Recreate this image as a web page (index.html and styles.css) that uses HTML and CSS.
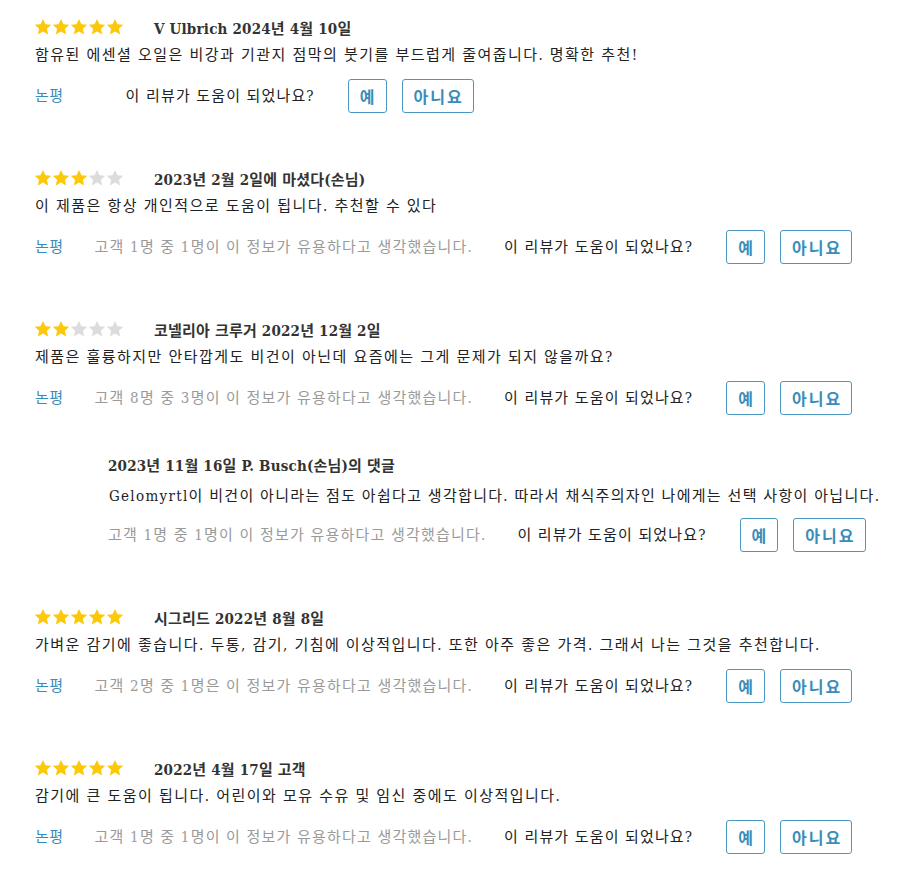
FILE: index.html
```html
<!DOCTYPE html>
<html lang="ko">
<head>
<meta charset="utf-8">
<title>리뷰</title>
<link rel="stylesheet" href="styles.css">
</head>
<body>
<svg width="0" height="0" class="defs">
  <defs>
    <symbol id="star" viewBox="0 0 24 24"><path d="M12 1.2l3.3 7 7.7.9-5.8 5.2 1.7 7.6L12 18l-6.9 3.9 1.7-7.6L1 9.1l7.7-.9z"/></symbol>
  </defs>
</svg>
<div class="reviews">

  <div class="review">
    <div class="head">
      <div class="stars"><svg class="on"><use href="#star"/></svg><svg class="on"><use href="#star"/></svg><svg class="on"><use href="#star"/></svg><svg class="on"><use href="#star"/></svg><svg class="on"><use href="#star"/></svg></div>
      <div class="title">V Ulbrich 2024년 4월 10일</div>
    </div>
    <p class="text">함유된 에센셜 오일은 비강과 기관지 점막의 붓기를 부드럽게 줄여줍니다. 명확한 추천!</p>
    <div class="actions">
      <a class="link" href="#">논평</a>
      <span class="count"></span>
      <span class="ask">이 리뷰가 도움이 되었나요?</span>
      <div class="btns"><button class="btn">예</button><button class="btn">아니요</button></div>
    </div>
  </div>

  <div class="review">
    <div class="head">
      <div class="stars"><svg class="on"><use href="#star"/></svg><svg class="on"><use href="#star"/></svg><svg class="on"><use href="#star"/></svg><svg class="off"><use href="#star"/></svg><svg class="off"><use href="#star"/></svg></div>
      <div class="title">2023년 2월 2일에 마셨다(손님)</div>
    </div>
    <p class="text">이 제품은 항상 개인적으로 도움이 됩니다. 추천할 수 있다</p>
    <div class="actions">
      <a class="link" href="#">논평</a>
      <span class="count">고객 1명 중 1명이 이 정보가 유용하다고 생각했습니다.</span>
      <span class="ask">이 리뷰가 도움이 되었나요?</span>
      <div class="btns"><button class="btn">예</button><button class="btn">아니요</button></div>
    </div>
  </div>

  <div class="review">
    <div class="head">
      <div class="stars"><svg class="on"><use href="#star"/></svg><svg class="on"><use href="#star"/></svg><svg class="off"><use href="#star"/></svg><svg class="off"><use href="#star"/></svg><svg class="off"><use href="#star"/></svg></div>
      <div class="title">코넬리아 크루거 2022년 12월 2일</div>
    </div>
    <p class="text">제품은 훌륭하지만 안타깝게도 비건이 아닌데 요즘에는 그게 문제가 되지 않을까요?</p>
    <div class="actions">
      <a class="link" href="#">논평</a>
      <span class="count">고객 8명 중 3명이 이 정보가 유용하다고 생각했습니다.</span>
      <span class="ask">이 리뷰가 도움이 되었나요?</span>
      <div class="btns"><button class="btn">예</button><button class="btn">아니요</button></div>
    </div>
  </div>

  <div class="reply">
    <div class="reply-title">2023년 11월 16일 P. Busch(손님)의 댓글</div>
    <p class="text">Gelomyrtl이 비건이 아니라는 점도 아쉽다고 생각합니다. 따라서 채식주의자인 나에게는 선택 사항이 아닙니다.</p>
    <div class="actions">
      <span class="count">고객 1명 중 1명이 이 정보가 유용하다고 생각했습니다.</span>
      <span class="ask">이 리뷰가 도움이 되었나요?</span>
      <div class="btns"><button class="btn">예</button><button class="btn">아니요</button></div>
    </div>
  </div>

  <div class="review">
    <div class="head">
      <div class="stars"><svg class="on"><use href="#star"/></svg><svg class="on"><use href="#star"/></svg><svg class="on"><use href="#star"/></svg><svg class="on"><use href="#star"/></svg><svg class="on"><use href="#star"/></svg></div>
      <div class="title">시그리드 2022년 8월 8일</div>
    </div>
    <p class="text">가벼운 감기에 좋습니다. 두통, 감기, 기침에 이상적입니다. 또한 아주 좋은 가격. 그래서 나는 그것을 추천합니다.</p>
    <div class="actions">
      <a class="link" href="#">논평</a>
      <span class="count">고객 2명 중 1명은 이 정보가 유용하다고 생각했습니다.</span>
      <span class="ask">이 리뷰가 도움이 되었나요?</span>
      <div class="btns"><button class="btn">예</button><button class="btn">아니요</button></div>
    </div>
  </div>

  <div class="review">
    <div class="head">
      <div class="stars"><svg class="on"><use href="#star"/></svg><svg class="on"><use href="#star"/></svg><svg class="on"><use href="#star"/></svg><svg class="on"><use href="#star"/></svg><svg class="on"><use href="#star"/></svg></div>
      <div class="title">2022년 4월 17일 고객</div>
    </div>
    <p class="text">감기에 큰 도움이 됩니다. 어린이와 모유 수유 및 임신 중에도 이상적입니다.</p>
    <div class="actions">
      <a class="link" href="#">논평</a>
      <span class="count">고객 1명 중 1명이 이 정보가 유용하다고 생각했습니다.</span>
      <span class="ask">이 리뷰가 도움이 되었나요?</span>
      <div class="btns"><button class="btn">예</button><button class="btn">아니요</button></div>
    </div>
  </div>

</div>
</body>
</html>
```
FILE: styles.css
```css
html, body {
  margin: 0;
  padding: 0;
  background: #fff;
}
body {
  font-family: "DejaVu Serif Condensed", "DejaVu Serif", "Noto Sans CJK KR", serif;
  font-stretch: condensed;
  font-size: 15px;
  color: #222;
}
.defs {
  position: absolute;
  width: 0;
  height: 0;
}
.reviews {
  padding: 15px 10px 0 34px;
}
.review {
  margin-bottom: 53px;
}
.head {
  display: flex;
  align-items: center;
  height: 24px;
  gap: 30px;
}
.stars {
  display: flex;
  gap: 0;
}
.stars svg {
  width: 18px;
  height: 18px;
}
.stars .on { fill: #fcc80a; }
.stars .off { fill: #dcdcdc; }
.title {
  font-weight: bold;
  color: #333;
  font-size: 15px;
  letter-spacing: 0.2px;
}
.text {
  margin: 4px 0 0 1px;
  line-height: 24px;
  font-size: 15px;
  letter-spacing: 1.45px;
  color: #222;
  white-space: nowrap;
}
.actions {
  display: flex;
  align-items: center;
  gap: 31px;
  margin-top: 12px;
  font-size: 15px;
  letter-spacing: 1.2px;
  line-height: 24px;
}
.link {
  color: #3a8db8;
  text-decoration: none;
  margin-left: 1px;
  letter-spacing: 0.5px;
}
.count {
  color: #9a9a9a;
}
.ask {
  color: #222;
  letter-spacing: 1.15px;
}
.btns {
  display: flex;
  gap: 15px;
  margin-left: 2px;
}
.btn {
  height: 34px;
  padding: 0 9px 0 11px;
  border: 1px solid #4a97c2;
  border-radius: 3px;
  background: #fff;
  color: #3a8db8;
  font-family: "Noto Sans CJK KR", sans-serif;
  font-weight: bold;
  font-size: 16px;
  letter-spacing: 2px;
  cursor: pointer;
}
.reply {
  margin: -14px 0 53px 74px;
}
.reply-title {
  font-weight: bold;
  color: #333;
  font-size: 15px;
  letter-spacing: 0.2px;
  line-height: 24px;
}
.reply .text {
  margin-top: 6px;
  letter-spacing: 1.3px;
}
.reply .actions {
  margin-top: 10px;
}
```
